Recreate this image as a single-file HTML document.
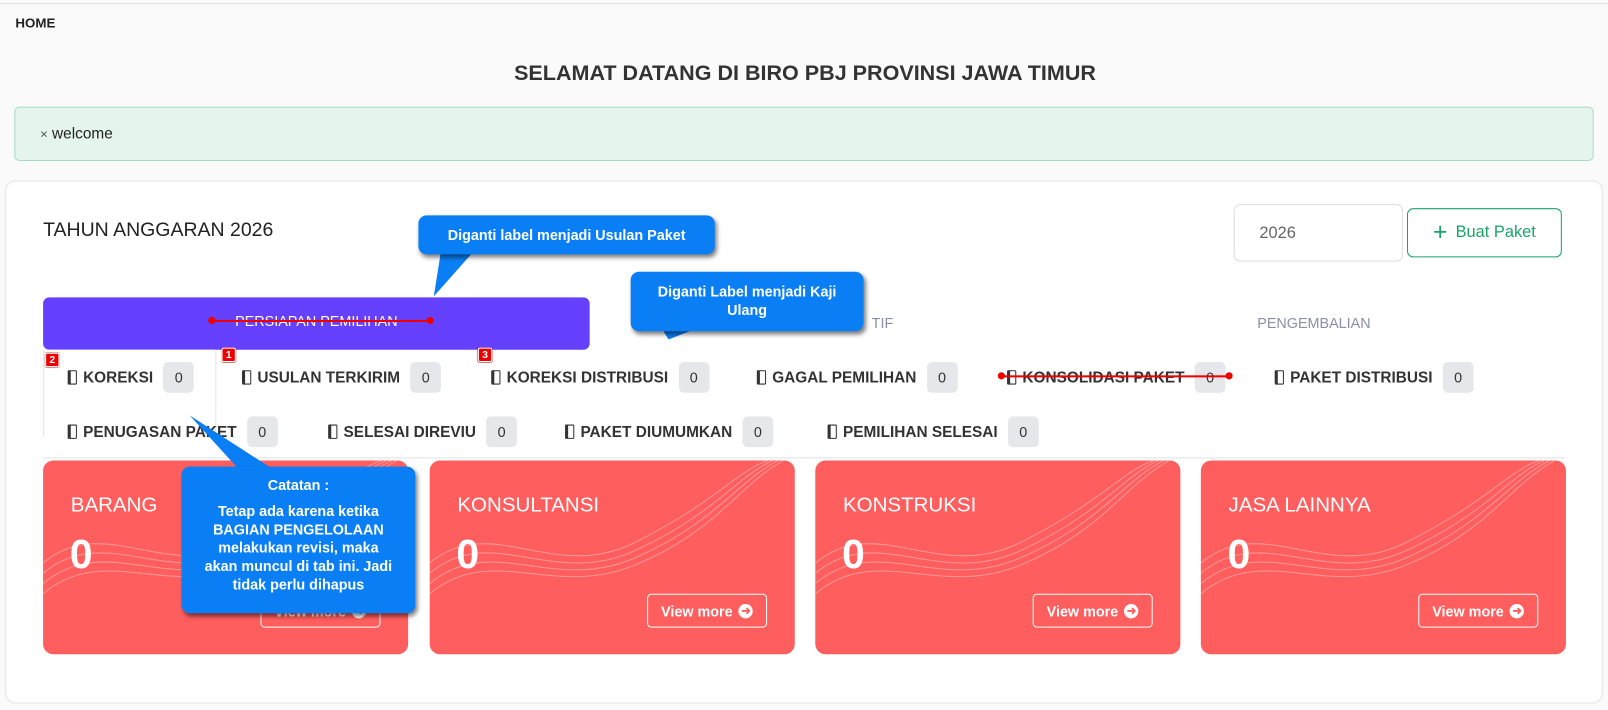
<!DOCTYPE html><html><head><style>
*{box-sizing:border-box;margin:0;padding:0}
body{width:1608px;height:709px;background:#fafafa;font-family:"Liberation Sans",sans-serif;position:relative;overflow:hidden;color:#222}
#w{position:absolute;left:0;top:0;width:1568px;height:692px;transform:scale(1.02551);transform-origin:0 0}
.a{position:absolute}
.tab{position:absolute;font-size:15px;font-weight:bold;color:#333;display:flex;align-items:center;gap:4px;height:30px}
.ic{display:inline-block;width:9px;height:14px;border:1.5px solid #333;border-left-width:3px;border-radius:1px;margin-right:2px}
.pill{background:#e6e7ea;border-radius:5px;width:30px;height:30px;display:inline-flex;align-items:center;justify-content:center;font-weight:normal;margin-left:6px;font-size:14px}
.card{position:absolute;top:449px;width:356px;height:189px;background:#ff5e5e;border-radius:10px;overflow:hidden;color:#fff}
.card svg{position:absolute;left:0;top:0}
.card h3{position:absolute;left:27px;top:33px;font-size:20px;font-weight:normal}
.card .n{position:absolute;left:26px;top:70px;font-size:40px;font-weight:bold}
.vm{position:absolute;left:212px;top:130px;width:117px;height:33px;border:1px solid #fff;border-radius:4px;font-size:14px;font-weight:bold;display:flex;align-items:center;justify-content:center;gap:6px}
.vm i{width:14px;height:14px;border-radius:50%;background:#fff;color:#ff5e5e;font-style:normal;font-size:11px;line-height:14px;text-align:center}
.bub{position:absolute;background:#0a7ff5;color:#fff;border-radius:8px;box-shadow:2px 3px 4px rgba(0,0,0,.5);font-size:14px;font-weight:bold;text-align:center}
.badge{position:absolute;width:14px;height:14px;background:#e00;color:#fff;font-size:10px;font-weight:bold;text-align:center;line-height:14px;border:1px solid #fff;border-radius:2px;box-shadow:0 0 1px #900}
</style></head><body><div id="w">
<div class="a" style="left:0;top:3px;width:1568px;height:1px;background:#e2e2e2"></div>
<div class="a" style="left:15px;top:15px;font-size:13px;font-weight:bold">HOME</div>
<div class="a" style="left:0;width:1570px;top:60px;text-align:center;font-size:21px;font-weight:bold;color:#333">SELAMAT DATANG DI BIRO PBJ PROVINSI JAWA TIMUR</div>
<div class="a" style="left:14px;top:104px;width:1540px;height:53px;background:#e5f5ee;border:1px solid #a6dcc3;border-radius:5px;font-size:15px;padding:17px 0 0 24px"><span style="color:#555;font-size:13px">×</span> welcome</div>
<div class="a" style="left:5px;top:176px;width:1558px;height:510px;background:#fff;border:1px solid #e2e2e2;border-radius:10px"></div>
<div class="a" style="left:42px;top:214px;font-size:19px">TAHUN ANGGARAN 2026</div>
<div class="a" style="left:1203px;top:199px;width:165px;height:56px;border:1px solid #ddd;border-radius:6px;font-size:16px;color:#666;padding:19px 0 0 24px">2026</div>
<div class="a" style="left:1372px;top:203px;width:151px;height:48px;border:1px solid #1aa36b;border-radius:6px;color:#1aa36b;font-size:16px;display:flex;align-items:center;justify-content:center;gap:8px"><span style="font-size:24px;line-height:20px">+</span>Buat Paket</div>
<div class="a" style="left:42px;top:290px;width:533px;height:51px;background:#6541ff;border-radius:6px;color:#fff;font-size:14px;text-align:center;line-height:47px">PERSIAPAN PEMILIHAN</div>
<div class="a" style="left:206px;top:312px;width:214px;height:2px;background:#e00"></div>
<div class="a" style="left:203px;top:309px;width:7px;height:7px;border-radius:50%;background:#e00"></div>
<div class="a" style="left:416px;top:309px;width:7px;height:7px;border-radius:50%;background:#e00"></div>
<div class="a" style="left:850px;top:307px;font-size:14px;color:#8a8fa8">TIF</div>
<div class="a" style="left:1226px;top:307px;font-size:14px;color:#8a8fa8">PENGEMBALIAN</div>
<div class="a" style="left:42px;top:341px;width:169px;height:85px;border:1px solid #e5e5e5;border-top:none;border-bottom:none;background:#fff"></div>
<div class="tab" style="left:66px;top:353px"><span class="ic"></span>KOREKSI<span class="pill">0</span></div>
<div class="tab" style="left:236px;top:353px"><span class="ic"></span>USULAN TERKIRIM<span class="pill">0</span></div>
<div class="tab" style="left:479px;top:353px"><span class="ic"></span>KOREKSI DISTRIBUSI<span class="pill">0</span></div>
<div class="tab" style="left:738px;top:353px"><span class="ic"></span>GAGAL PEMILIHAN<span class="pill">0</span></div>
<div class="tab" style="left:982px;top:353px"><span class="ic"></span>KONSOLIDASI PAKET<span class="pill">0</span></div>
<div class="tab" style="left:1243px;top:353px"><span class="ic"></span>PAKET DISTRIBUSI<span class="pill">0</span></div>
<div class="a" style="left:976px;top:366px;width:222px;height:2px;background:#e00"></div>
<div class="a" style="left:973px;top:363px;width:7px;height:7px;border-radius:50%;background:#e00"></div>
<div class="a" style="left:1195px;top:363px;width:7px;height:7px;border-radius:50%;background:#e00"></div>
<div class="tab" style="left:66px;top:406px"><span class="ic"></span>PENUGASAN PAKET<span class="pill">0</span></div>
<div class="tab" style="left:320px;top:406px"><span class="ic"></span>SELESAI DIREVIU<span class="pill">0</span></div>
<div class="tab" style="left:551px;top:406px"><span class="ic"></span>PAKET DIUMUMKAN<span class="pill">0</span></div>
<div class="tab" style="left:807px;top:406px"><span class="ic"></span>PEMILIHAN SELESAI<span class="pill">0</span></div>
<div class="a" style="left:42px;top:446px;width:1484px;height:1px;background:#e2e2e2"></div>
<div class="badge" style="left:44px;top:344px">2</div>
<div class="badge" style="left:216px;top:339px">1</div>
<div class="badge" style="left:466px;top:339px">3</div>
<div class="card" style="left:42px"><svg width="356" height="189"><g fill="none" stroke="#fff" stroke-opacity=".35"><path d="M0,100 C60,50 120,120 200,80 S300,10 330,0"/><path d="M0,110 C60,60 120,125 200,88 S300,15 335,0"/><path d="M0,120 C60,70 120,130 200,95 S300,20 340,0"/><path d="M0,130 C60,80 120,135 200,102 S300,25 345,0"/></g></svg><h3>BARANG</h3><div class="n">0</div><div class="vm">View more<i>➜</i></div></div>
<div class="card" style="left:419px"><svg width="356" height="189"><g fill="none" stroke="#fff" stroke-opacity=".35"><path d="M0,100 C60,50 120,120 200,80 S300,10 330,0"/><path d="M0,110 C60,60 120,125 200,88 S300,15 335,0"/><path d="M0,120 C60,70 120,130 200,95 S300,20 340,0"/><path d="M0,130 C60,80 120,135 200,102 S300,25 345,0"/></g></svg><h3>KONSULTANSI</h3><div class="n">0</div><div class="vm">View more<i>➜</i></div></div>
<div class="card" style="left:795px"><svg width="356" height="189"><g fill="none" stroke="#fff" stroke-opacity=".35"><path d="M0,100 C60,50 120,120 200,80 S300,10 330,0"/><path d="M0,110 C60,60 120,125 200,88 S300,15 335,0"/><path d="M0,120 C60,70 120,130 200,95 S300,20 340,0"/><path d="M0,130 C60,80 120,135 200,102 S300,25 345,0"/></g></svg><h3>KONSTRUKSI</h3><div class="n">0</div><div class="vm">View more<i>➜</i></div></div>
<div class="card" style="left:1171px"><svg width="356" height="189"><g fill="none" stroke="#fff" stroke-opacity=".35"><path d="M0,100 C60,50 120,120 200,80 S300,10 330,0"/><path d="M0,110 C60,60 120,125 200,88 S300,15 335,0"/><path d="M0,120 C60,70 120,130 200,95 S300,20 340,0"/><path d="M0,130 C60,80 120,135 200,102 S300,25 345,0"/></g></svg><h3>JASA LAINNYA</h3><div class="n">0</div><div class="vm">View more<i>➜</i></div></div>
<svg class="a" style="left:0;top:0" width="1568" height="692">
<polygon points="430,245 462,245 423,289" fill="#0a7ff5"/>
<polygon points="645,320 680,320 652,331" fill="#0a7ff5"/>
<polygon points="235,460 270,460 185,405" fill="#0a7ff5"/>
</svg>
<div class="bub" style="left:408px;top:210px;width:289px;height:38px;line-height:38px">Diganti label menjadi Usulan Paket</div>
<div class="bub" style="left:615px;top:265px;width:227px;height:58px;padding-top:10px;line-height:18px">Diganti Label menjadi Kaji<br>Ulang</div>
<div class="bub" style="left:177px;top:455px;width:228px;height:143px;padding-top:9px;line-height:18px">Catatan :<br><div style="height:7px"></div>Tetap ada karena ketika<br>BAGIAN PENGELOLAAN<br>melakukan revisi, maka<br>akan muncul di tab ini. Jadi<br>tidak perlu dihapus</div>
</div></body></html>
